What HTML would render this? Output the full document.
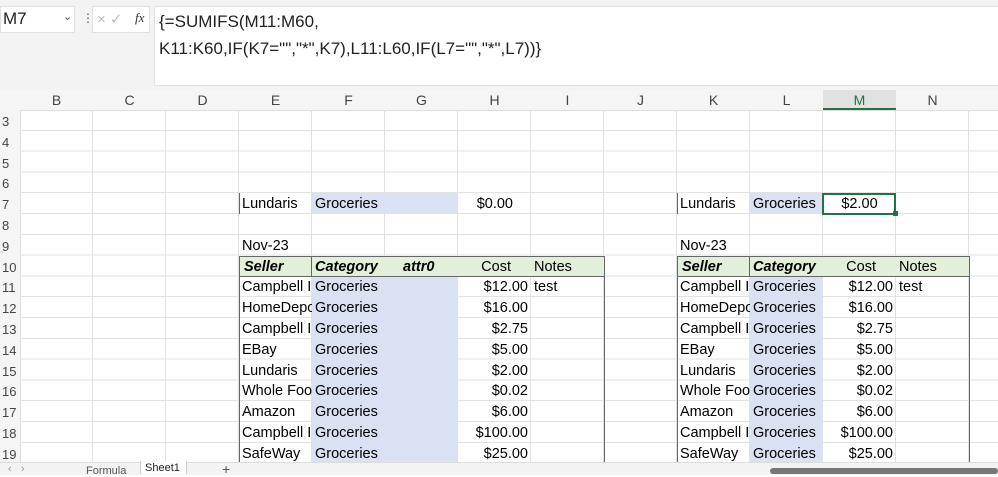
<!DOCTYPE html><html><head><style>
body{margin:0;width:998px;height:474px;overflow:hidden;background:#fff;font-family:"Liberation Sans",sans-serif;position:relative}
.a{position:absolute}
.c{position:absolute;height:21px;line-height:23px;font-size:14.5px;white-space:nowrap;overflow:hidden;padding:0 3px;box-sizing:border-box;color:#000}
.r{text-align:right}
.b{font-weight:bold;font-style:italic}
.h{position:absolute;top:90px;height:20px;line-height:21px;text-align:center;font-size:14px;color:#444;width:73px}
.rn{position:absolute;left:0;width:20px;font-size:13px;color:#444;height:21px;line-height:23px;padding-left:2px}
</style></head><body>
<div class="a" style="left:0;top:0;width:998px;height:90px;background:#f3f3f3"></div>
<div class="a" style="left:0;top:6px;width:75px;height:27px;background:#fff;border:1px solid #e0e0e0;box-sizing:border-box"></div>
<div class="a" style="left:3px;top:9px;font-size:17px;color:#222">M7</div>
<div class="a" style="left:63px;top:10px;font-size:11px;color:#555">⌄</div>
<div class="a" style="left:82px;top:11px;font-size:12px;color:#555">⋮</div>
<div class="a" style="left:92px;top:6px;width:58px;height:27px;background:#fff;border:1px solid #e0e0e0;box-sizing:border-box"></div>
<div class="a" style="left:97px;top:10px;font-size:15px;color:#bbb">× ✓</div>
<div class="a" style="left:135px;top:10px;font-size:13px;font-style:italic;font-family:'Liberation Serif',serif;color:#333">fx</div>
<div class="a" style="left:154px;top:6px;width:850px;height:80px;background:#fff;border:1px solid #e0e0e0;border-radius:3px;box-sizing:border-box"></div>
<div class="a" style="left:159px;top:8px;font-size:17px;line-height:27px;color:#222">{=SUMIFS(M11:M60,<br>K11:K60,IF(K7="","*",K7),L11:L60,IF(L7="","*",L7))}</div>
<div class="a" style="left:0;top:90px;width:998px;height:20px;background:#f5f5f5;border-bottom:1px solid #ddd"></div>
<div class="a" style="left:823px;top:90px;width:73px;height:20px;background:#e1e1e1;border-bottom:2px solid #217346;box-sizing:border-box"></div>
<div class="a" style="left:0;top:110px;width:20px;height:352px;background:#f5f5f5;border-right:1px solid #ddd"></div>
<div class="a" style="left:20px;top:110px;width:978px;height:352px;background-image:repeating-linear-gradient(90deg,transparent 0 72px,#e2e2e2 72px 73px),repeating-linear-gradient(180deg,transparent 0 19.8px,#e2e2e2 19.8px 20.8px)"></div>
<div class="h" style="left:20px">B</div><div class="h" style="left:93px">C</div><div class="h" style="left:166px">D</div><div class="h" style="left:239px">E</div><div class="h" style="left:312px">F</div><div class="h" style="left:385px">G</div><div class="h" style="left:458px">H</div><div class="h" style="left:531px">I</div><div class="h" style="left:604px">J</div><div class="h" style="left:677px">K</div><div class="h" style="left:750px">L</div><div class="h" style="left:823px;color:#217346">M</div><div class="h" style="left:896px">N</div>
<div class="rn" style="top:110px">3</div><div class="rn" style="top:130.8px">4</div><div class="rn" style="top:151.6px">5</div><div class="rn" style="top:172.4px">6</div><div class="rn" style="top:193.2px">7</div><div class="rn" style="top:214px">8</div><div class="rn" style="top:234.8px">9</div><div class="rn" style="top:255.6px">10</div><div class="rn" style="top:276.4px">11</div><div class="rn" style="top:297.2px">12</div><div class="rn" style="top:318px">13</div><div class="rn" style="top:338.8px">14</div><div class="rn" style="top:359.6px">15</div><div class="rn" style="top:380.4px">16</div><div class="rn" style="top:401.2px">17</div><div class="rn" style="top:422px">18</div><div class="rn" style="top:442.8px">19</div>
<div class="a" style="left:312px;top:193.2px;width:146px;height:20px;background:#d9e1f2"></div>
<div class="a" style="left:750px;top:193.2px;width:72px;height:20px;background:#d9e1f2"></div>
<div class="a" style="left:312px;top:276.4px;width:146px;height:186px;background:#d9e1f2"></div>
<div class="a" style="left:750px;top:276.4px;width:73px;height:186px;background:#d9e1f2"></div>
<div class="a" style="left:239px;top:255.6px;width:365px;height:21px;background:#e2efda"></div>
<div class="a" style="left:677px;top:255.6px;width:292px;height:21px;background:#e2efda"></div>
<div class="a" style="left:239px;top:255.6px;width:366px;height:206.4px;border:1px solid #666;border-bottom:none;box-sizing:border-box"></div>
<div class="a" style="left:239px;top:276px;width:366px;height:1px;background:#666"></div>
<div class="a" style="left:311px;top:255.6px;width:1px;height:21px;background:#666"></div>
<div class="a" style="left:677px;top:255.6px;width:293px;height:206.4px;border:1px solid #666;border-bottom:none;box-sizing:border-box"></div>
<div class="a" style="left:677px;top:276px;width:293px;height:1px;background:#666"></div>
<div class="a" style="left:749px;top:255.6px;width:1px;height:21px;background:#666"></div>
<div class="a" style="left:239px;top:193px;width:1px;height:21px;background:#666"></div>
<div class="a" style="left:677px;top:193px;width:1px;height:21px;background:#666"></div>
<div class="a" style="left:822px;top:192.5px;width:74px;height:22px;border:2px solid #217346;box-sizing:border-box"></div>
<div class="a" style="left:893px;top:211px;width:5px;height:5px;background:#217346"></div>
<div class="c" style="left:239px;top:193.2px;width:73px">Lundaris</div><div class="c" style="left:312px;top:193.2px;width:146px">Groceries</div><div class="c r" style="left:458px;top:193.2px;width:73px;padding-right:18px">$0.00</div>
<div class="c" style="left:677px;top:193.2px;width:73px">Lundaris</div><div class="c" style="left:750px;top:193.2px;width:73px">Groceries</div><div class="c" style="left:823px;top:193.2px;width:73px;text-align:center">$2.00</div>
<div class="c" style="left:239px;top:234.8px;width:120px">Nov-23</div><div class="c" style="left:677px;top:234.8px;width:120px">Nov-23</div>
<div class="c b" style="left:241px;top:255.6px;width:70px">Seller</div><div class="c b" style="left:312px;top:255.6px;width:73px">Category</div><div class="c b" style="left:400px;top:255.6px;width:58px">attr0</div><div class="c r" style="left:458px;top:255.6px;width:73px;padding-right:20px">Cost</div><div class="c" style="left:531px;top:255.6px;width:73px">Notes</div>
<div class="c b" style="left:679px;top:255.6px;width:70px">Seller</div><div class="c b" style="left:750px;top:255.6px;width:73px">Category</div><div class="c r" style="left:823px;top:255.6px;width:73px;padding-right:20px">Cost</div><div class="c" style="left:896px;top:255.6px;width:73px">Notes</div>
<div class="c" style="left:239px;top:276.4px;width:73px">Campbell I</div><div class="c" style="left:312px;top:276.4px;width:73px">Groceries</div><div class="c r" style="left:458px;top:276.4px;width:73px">$12.00</div><div class="c" style="left:531px;top:276.4px;width:73px">test</div>
<div class="c" style="left:239px;top:297.2px;width:73px">HomeDepot</div><div class="c" style="left:312px;top:297.2px;width:73px">Groceries</div><div class="c r" style="left:458px;top:297.2px;width:73px">$16.00</div>
<div class="c" style="left:239px;top:318px;width:73px">Campbell I</div><div class="c" style="left:312px;top:318px;width:73px">Groceries</div><div class="c r" style="left:458px;top:318px;width:73px">$2.75</div>
<div class="c" style="left:239px;top:338.8px;width:73px">EBay</div><div class="c" style="left:312px;top:338.8px;width:73px">Groceries</div><div class="c r" style="left:458px;top:338.8px;width:73px">$5.00</div>
<div class="c" style="left:239px;top:359.6px;width:73px">Lundaris</div><div class="c" style="left:312px;top:359.6px;width:73px">Groceries</div><div class="c r" style="left:458px;top:359.6px;width:73px">$2.00</div>
<div class="c" style="left:239px;top:380.4px;width:73px">Whole Foods</div><div class="c" style="left:312px;top:380.4px;width:73px">Groceries</div><div class="c r" style="left:458px;top:380.4px;width:73px">$0.02</div>
<div class="c" style="left:239px;top:401.2px;width:73px">Amazon</div><div class="c" style="left:312px;top:401.2px;width:73px">Groceries</div><div class="c r" style="left:458px;top:401.2px;width:73px">$6.00</div>
<div class="c" style="left:239px;top:422px;width:73px">Campbell I</div><div class="c" style="left:312px;top:422px;width:73px">Groceries</div><div class="c r" style="left:458px;top:422px;width:73px">$100.00</div>
<div class="c" style="left:239px;top:442.8px;width:73px">SafeWay</div><div class="c" style="left:312px;top:442.8px;width:73px">Groceries</div><div class="c r" style="left:458px;top:442.8px;width:73px">$25.00</div>
<div class="c" style="left:677px;top:276.4px;width:73px">Campbell I</div><div class="c" style="left:750px;top:276.4px;width:73px">Groceries</div><div class="c r" style="left:823px;top:276.4px;width:73px">$12.00</div><div class="c" style="left:896px;top:276.4px;width:73px">test</div>
<div class="c" style="left:677px;top:297.2px;width:73px">HomeDepot</div><div class="c" style="left:750px;top:297.2px;width:73px">Groceries</div><div class="c r" style="left:823px;top:297.2px;width:73px">$16.00</div>
<div class="c" style="left:677px;top:318px;width:73px">Campbell I</div><div class="c" style="left:750px;top:318px;width:73px">Groceries</div><div class="c r" style="left:823px;top:318px;width:73px">$2.75</div>
<div class="c" style="left:677px;top:338.8px;width:73px">EBay</div><div class="c" style="left:750px;top:338.8px;width:73px">Groceries</div><div class="c r" style="left:823px;top:338.8px;width:73px">$5.00</div>
<div class="c" style="left:677px;top:359.6px;width:73px">Lundaris</div><div class="c" style="left:750px;top:359.6px;width:73px">Groceries</div><div class="c r" style="left:823px;top:359.6px;width:73px">$2.00</div>
<div class="c" style="left:677px;top:380.4px;width:73px">Whole Foods</div><div class="c" style="left:750px;top:380.4px;width:73px">Groceries</div><div class="c r" style="left:823px;top:380.4px;width:73px">$0.02</div>
<div class="c" style="left:677px;top:401.2px;width:73px">Amazon</div><div class="c" style="left:750px;top:401.2px;width:73px">Groceries</div><div class="c r" style="left:823px;top:401.2px;width:73px">$6.00</div>
<div class="c" style="left:677px;top:422px;width:73px">Campbell I</div><div class="c" style="left:750px;top:422px;width:73px">Groceries</div><div class="c r" style="left:823px;top:422px;width:73px">$100.00</div>
<div class="c" style="left:677px;top:442.8px;width:73px">SafeWay</div><div class="c" style="left:750px;top:442.8px;width:73px">Groceries</div><div class="c r" style="left:823px;top:442.8px;width:73px">$25.00</div>
<div class="a" style="left:0;top:462px;width:998px;height:12px;background:#f3f3f3;border-top:1px solid #ddd"></div>
<div class="a" style="left:8px;top:463px;font-size:11px;color:#999">‹ &nbsp; ›</div>
<div class="a" style="left:86px;top:465px;font-size:11px;color:#555">Formula</div>
<div class="a" style="left:140px;top:461px;width:45px;height:13px;background:#fff;border-left:1px solid #ccc;border-right:1px solid #ccc"></div>
<div class="a" style="left:145px;top:462px;font-size:11px;color:#222">Sheet1</div>
<div class="a" style="left:222px;top:461px;font-size:14px;color:#555">+</div>
<div class="a" style="left:770px;top:468px;width:228px;height:6px;background:#777;border-radius:3px"></div>
</body></html>
